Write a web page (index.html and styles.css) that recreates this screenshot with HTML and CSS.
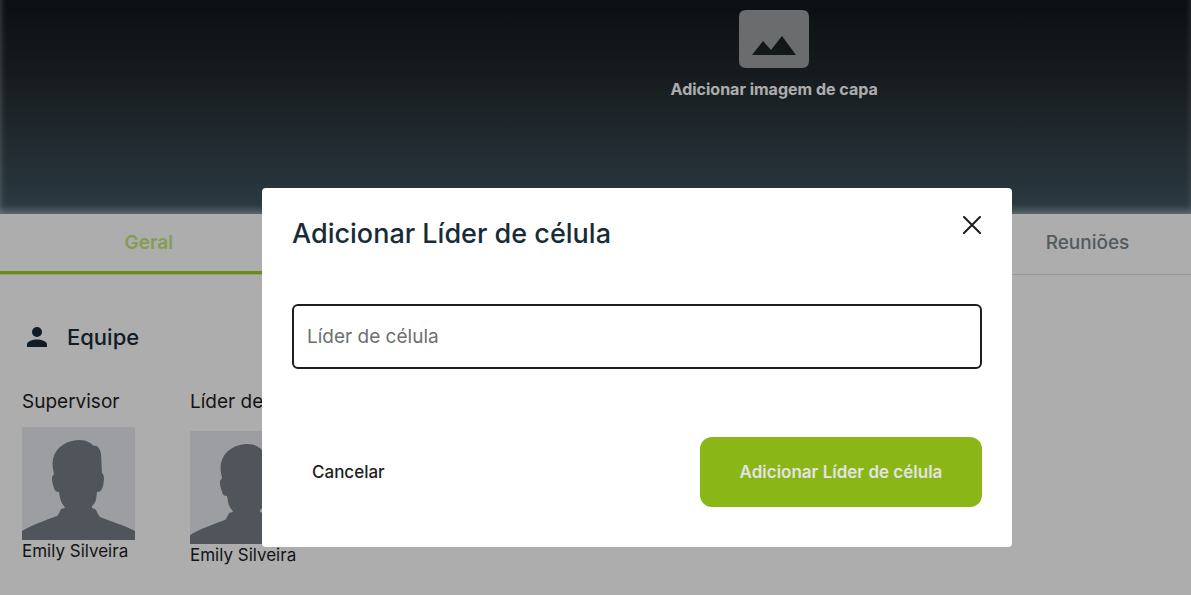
FILE: index.html
```html
<!DOCTYPE html>
<html lang="pt-BR">
<head>
  <meta charset="UTF-8" />
  <meta name="viewport" content="width=device-width, initial-scale=1.0"/>
  <title>Célula</title>
  <link rel="stylesheet" href="styles.css">
</head>
<body>

  <!-- Avatar shape used by every team member -->
  <svg class="hidden" aria-hidden="true">
    <symbol id="avatar" viewBox="0 0 113 113">
      <path d="M0 104 C12 97 24 93 35 89 C37 87 38 84 39 82 L43 81 L42 79 C38 74 38 70 37 65 C34 65 33 64 32 61 C30 56 30 53 30 50 L32 47 C31 42 30 38 31 32 C34 19 46 13 58 13 C64 13 69 16 72 19 C76 18 78 22 79 27 L80 46 C83 49 82 54 81 59 C80 63 78 65 75 65 C74 70 75 75 70 79 L70 81 L73 82 C75 84 76 88 78 90 C90 95 102 98 113 104 V113 H0 Z"/>
    </symbol>
  </svg>

  <header class="cover">
    <button type="button" class="cover-button">
      <svg class="cover-icon" viewBox="0 0 70 58" aria-hidden="true">
        <path fill-rule="evenodd" d="M7 0 H63 Q70 0 70 7 V51 Q70 58 63 58 H7 Q0 58 0 51 V7 Q0 0 7 0 Z M13 45 H57 L43 26 L32 40 L24 31 Z"/>
      </svg>
      Adicionar imagem de capa
    </button>
  </header>

  <nav class="tabs">
    <a href="#geral" class="tab active">Geral</a>
    <a href="#reunioes" class="tab tab-last">Reuniões</a>
  </nav>

  <main class="team" id="geral">
    <h2 class="team-title">
      <svg class="team-icon" viewBox="0 0 20 20" aria-hidden="true">
        <circle cx="10" cy="5" r="5"/>
        <path d="M0 20 V17.500 C0 14.200 6 12.500 10 12.500 C14 12.500 20 14.200 20 17.500 V20 Z"/>
      </svg>
      Equipe
    </h2>
    <div class="members">
      <section class="member">
        <h3>Supervisor</h3>
        <svg class="avatar" aria-hidden="true"><use href="#avatar"/></svg>
        <p>Emily Silveira</p>
      </section>
      <section class="member member-leader">
        <h3>Líder de célula</h3>
        <svg class="avatar" aria-hidden="true"><use href="#avatar"/></svg>
        <p>Emily Silveira</p>
      </section>
    </div>
  </main>

  <div class="overlay">
    <form class="modal" role="dialog" aria-labelledby="modalTitle">
      <div class="modal-header">
        <h1 id="modalTitle">Adicionar Líder de célula</h1>
        <button type="button" class="close" aria-label="Fechar">
          <svg viewBox="0 0 18 18" aria-hidden="true"><path d="M1 1 L17 17 M17 1 L1 17"/></svg>
        </button>
      </div>
      <input type="text" class="field" placeholder="Líder de célula" aria-label="Líder de célula">
      <div class="modal-actions">
        <button type="button" class="cancel">Cancelar</button>
        <button type="submit" class="submit">Adicionar Líder de célula</button>
      </div>
    </form>
  </div>

</body>
</html>
```
FILE: styles.css
```css
* {
  box-sizing: border-box;
}

body {
  margin: 0;
  height: 100vh;
  overflow: hidden;
  background: #fff;
  color: #1d1d1f;
  font-family: Inter, 'Liberation Sans', sans-serif;
  font-size: 17px;
}

h1, h2, h3, p {
  margin: 0;
  font-weight: 500;
}

button {
  padding: 0;
  border: none;
  background: none;
  font-family: inherit;
  font-size: 17px;
  cursor: pointer;
}

.hidden {
  display: none;
}

.cover {
  height: 214px;
  padding: 10px 0 0 30%;
  background: linear-gradient(#11171b, #20292d 35%, #2c373e 55%, #405661);
  box-shadow: inset 0 -6px 8px -3px rgba(255, 255, 255, 0.5), inset 6px 0 8px -6px rgba(255, 255, 255, 0.2);
}

.cover-button {
  display: flex;
  flex-direction: column;
  align-items: center;
  gap: 11px;
  margin: 0 auto;
  color: #fff;
  font-size: 16px;
  font-weight: 700;
  line-height: 20px;
}

.cover-icon {
  width: 70px;
  height: 58px;
  fill: #9da0a2;
}

.tabs {
  display: flex;
  justify-content: space-between;
  height: 61px;
  border-bottom: 1px solid #e0e0e0;
}

.tab {
  display: flex;
  align-items: center;
  justify-content: center;
  width: 25%;
  border-bottom: 3px solid transparent;
  color: #7a868d;
  font-size: 19px;
  font-weight: 500;
  text-decoration: none;
}

.tab.active {
  border-color: #99d21a;
  color: #c6e878;
  font-weight: 600;
}

.tab-last {
  width: 207px;
}

.team {
  padding: 46px 22px;
}

.team-title {
  display: flex;
  align-items: center;
  gap: 20px;
  padding-left: 5px;
  color: #182c38;
  font-size: 22px;
  line-height: 32px;
}

.team-icon {
  width: 20px;
  height: 20px;
  fill: #182c38;
}

.members {
  display: flex;
  gap: 55px;
  margin-top: 36px;
}

.member {
  width: 113px;
  white-space: nowrap;
}

.member h3 {
  margin-bottom: 12px;
  font-size: 19px;
  font-weight: 400;
  line-height: 26px;
}

.member p {
  font-weight: 400;
  line-height: 22px;
}

.member-leader h3 {
  margin-bottom: 16px;
}

.avatar {
  display: block;
  width: 113px;
  height: 113px;
  background: #e7e9ee;
  fill: #767c87;
}

.overlay {
  position: fixed;
  inset: 0;
  padding: 188px 15% 0 22%;
  background: rgba(0, 0, 0, 0.32);
}

.modal {
  padding: 24px 30px 40px;
  border-radius: 4px;
  background: #fff;
}

.modal-header {
  display: flex;
  justify-content: space-between;
  align-items: flex-start;
  margin-bottom: 48px;
}

.modal-header h1 {
  color: #182c38;
  font-size: 27px;
  line-height: 44px;
}

.close {
  display: flex;
  padding: 4px 1px;
}

.close svg {
  width: 18px;
  height: 18px;
  stroke: #1d1d1f;
  stroke-width: 2;
  stroke-linecap: round;
}

.field {
  display: block;
  width: 100%;
  height: 65px;
  padding: 0 13px;
  border: 2px solid #1d1d1f;
  border-radius: 6px;
  color: #1d1d1f;
  font-family: inherit;
  font-size: 19px;
}

.field::placeholder {
  color: #6f6f6f;
}

.modal-actions {
  display: flex;
  justify-content: space-between;
  align-items: center;
  margin-top: 68px;
}

.cancel {
  padding: 20px;
  color: #1d1d1f;
  font-weight: 500;
}

.submit {
  height: 70px;
  padding: 0 40px;
  border-radius: 12px;
  background: #8ab717;
  color: #e3e3e3;
  font-weight: 600;
}
```
